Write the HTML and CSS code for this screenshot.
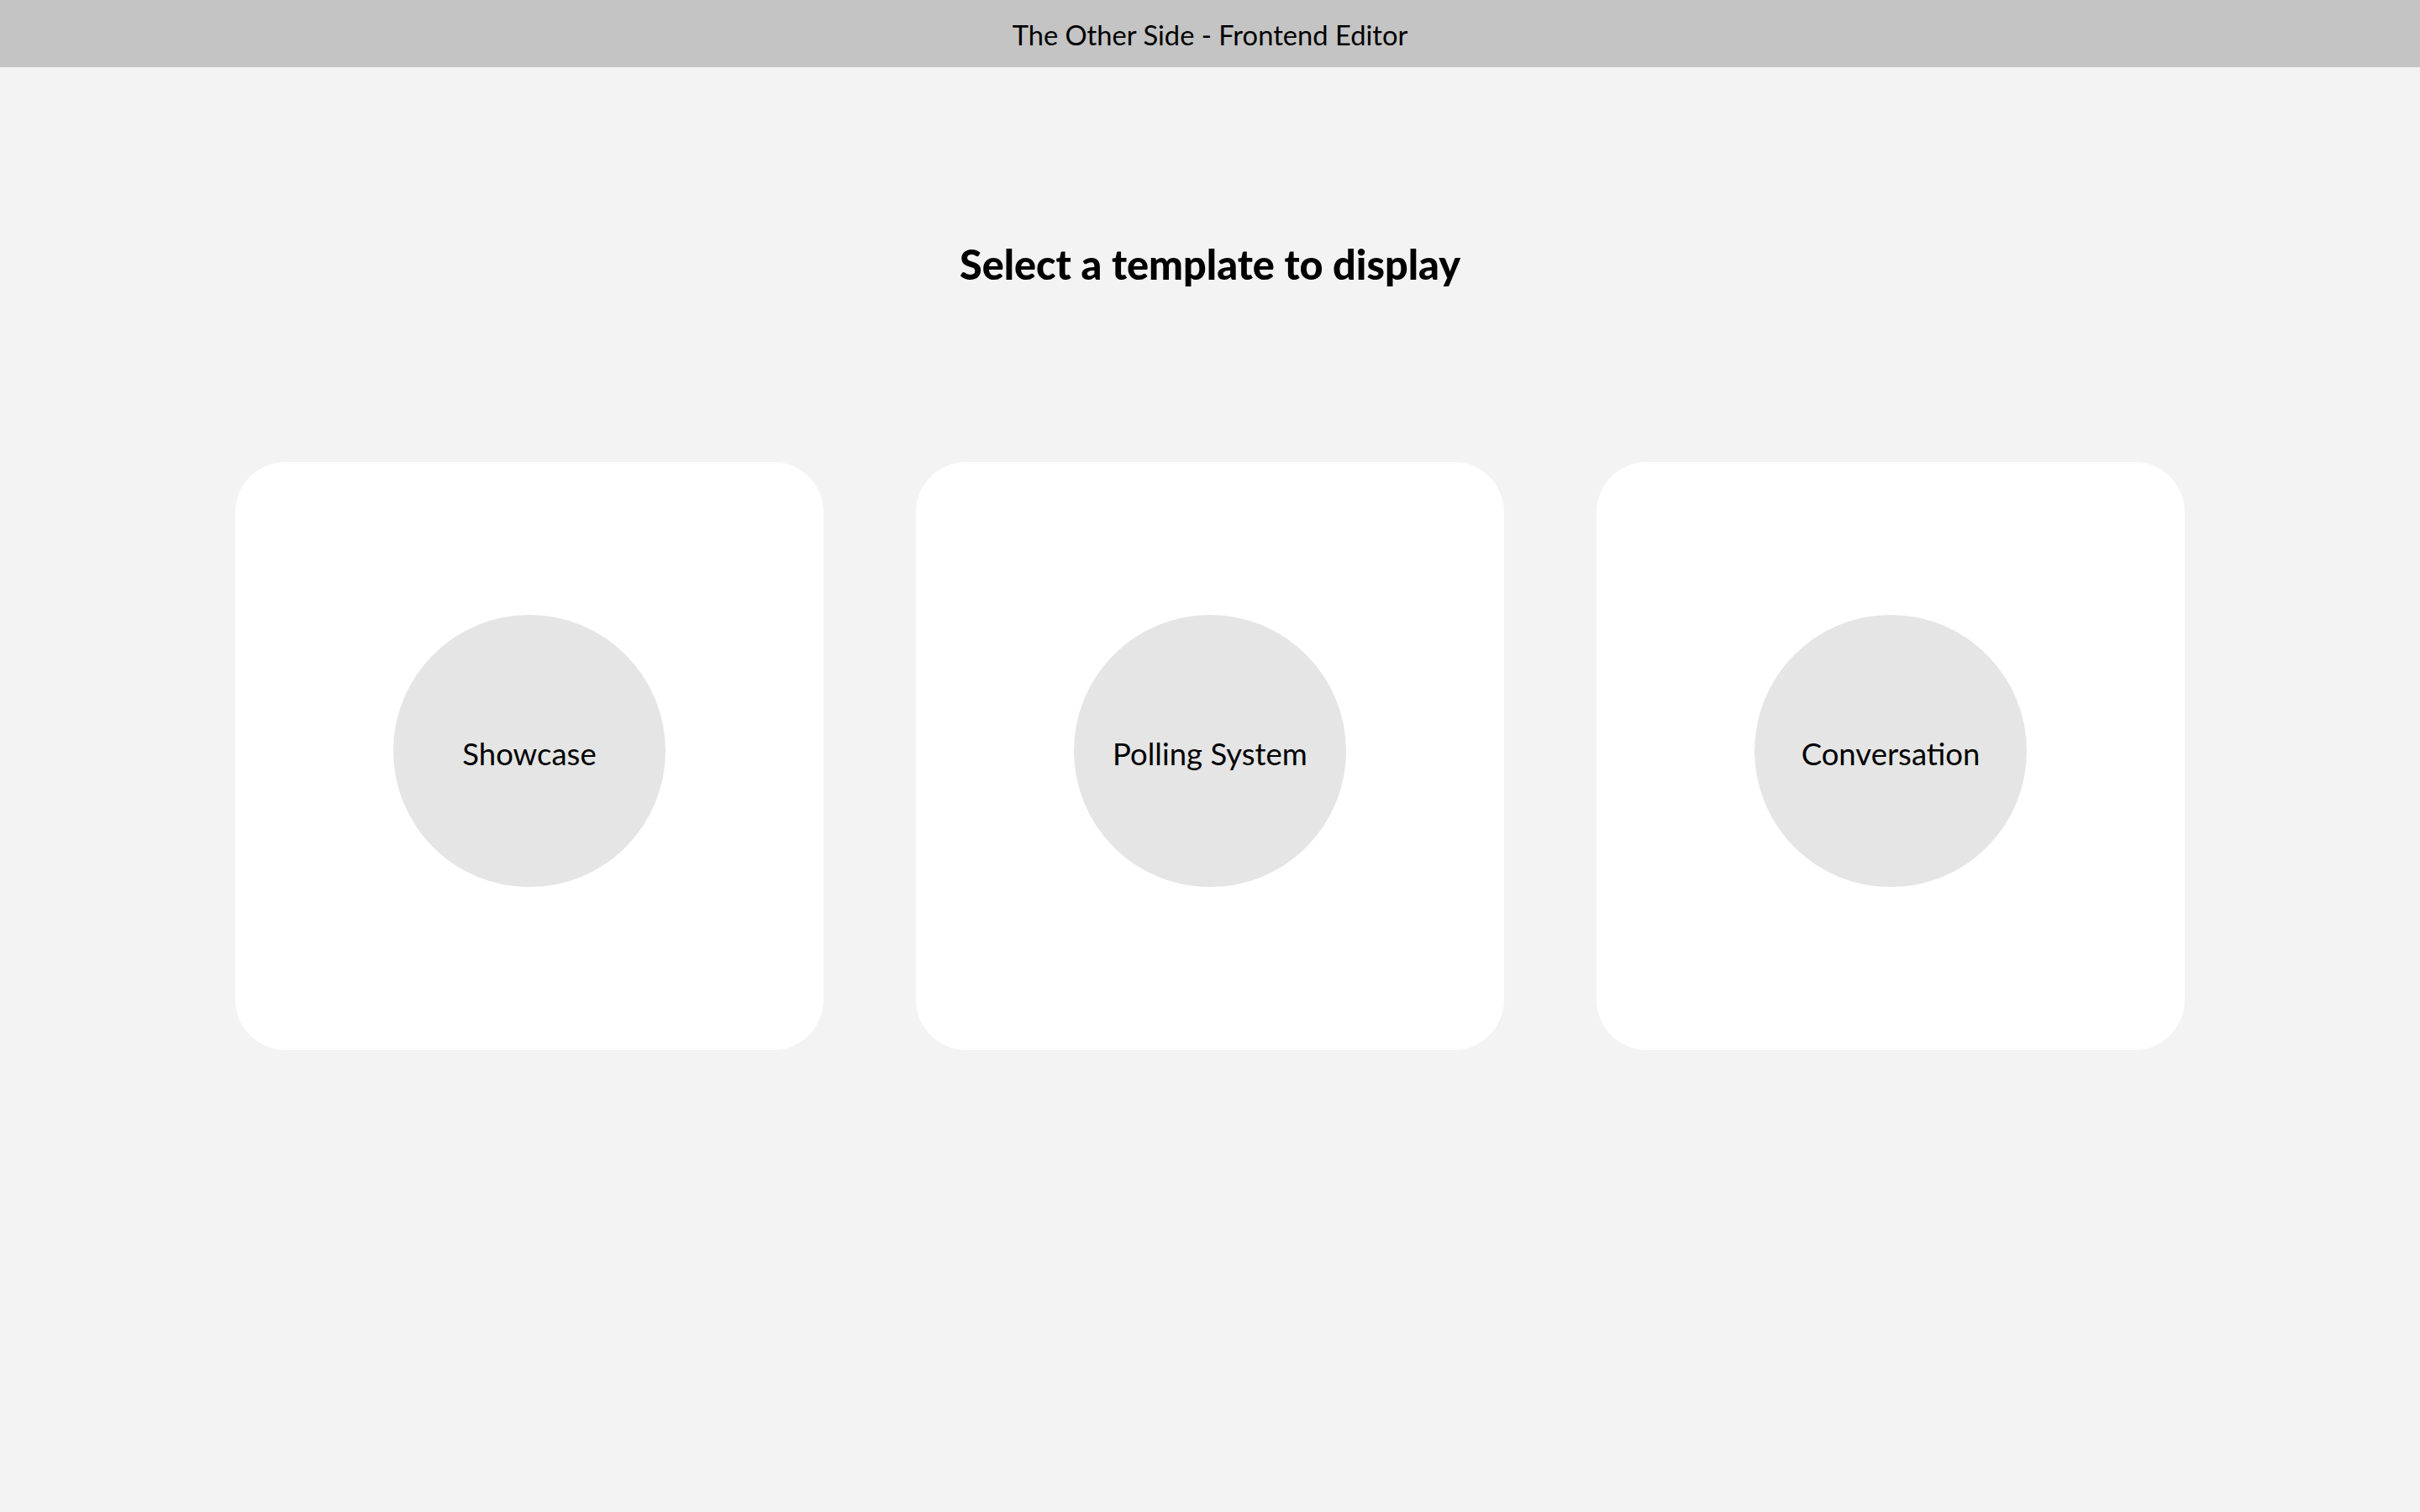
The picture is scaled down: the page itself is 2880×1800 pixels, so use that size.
FILE: index.html
```html
<!DOCTYPE html>
<html lang="en">
<head>
<meta charset="utf-8">
<title>The Other Side - Frontend Editor</title>
<link rel="stylesheet" href="styles.css">
</head>
<body>
<header class="topbar">The Other Side - Frontend Editor</header>
<main class="content">
  <h1 class="heading">Select a template to display</h1>
  <div class="cards">
    <div class="card"><div class="bubble">Showcase</div></div>
    <div class="card"><div class="bubble">Polling System</div></div>
    <div class="card"><div class="bubble">Conversation</div></div>
  </div>
</main>
</body>
</html>
```
FILE: styles.css
```css
html, body {
  margin: 0;
  padding: 0;
}
body {
  background: #f3f3f3;
  font-family: Lato, "Liberation Sans", sans-serif;
  color: #000;
  min-height: 1800px;
}
.topbar {
  height: 80px;
  background: #c4c4c4;
  display: flex;
  align-items: center;
  justify-content: center;
  font-size: 32.7px;
  padding-top: 2px;
  box-sizing: border-box;
}
.content {
  display: flex;
  flex-direction: column;
  align-items: center;
}
.heading {
  margin: 0;
  margin-top: 206px;
  font-size: 48.6px;
  font-weight: 900;
  line-height: 56px;
}
.cards {
  margin-top: 208px;
  display: flex;
  gap: 110px;
}
.card {
  width: 700px;
  height: 700px;
  background: #fff;
  border-radius: 60px;
  display: flex;
  align-items: center;
  justify-content: center;
  padding-bottom: 12px;
  box-sizing: border-box;
}
.bubble {
  width: 324px;
  height: 324px;
  border-radius: 50%;
  background: #e5e5e5;
  display: flex;
  align-items: center;
  justify-content: center;
  font-size: 36.5px;
  padding-top: 6px;
  box-sizing: border-box;
}
```
